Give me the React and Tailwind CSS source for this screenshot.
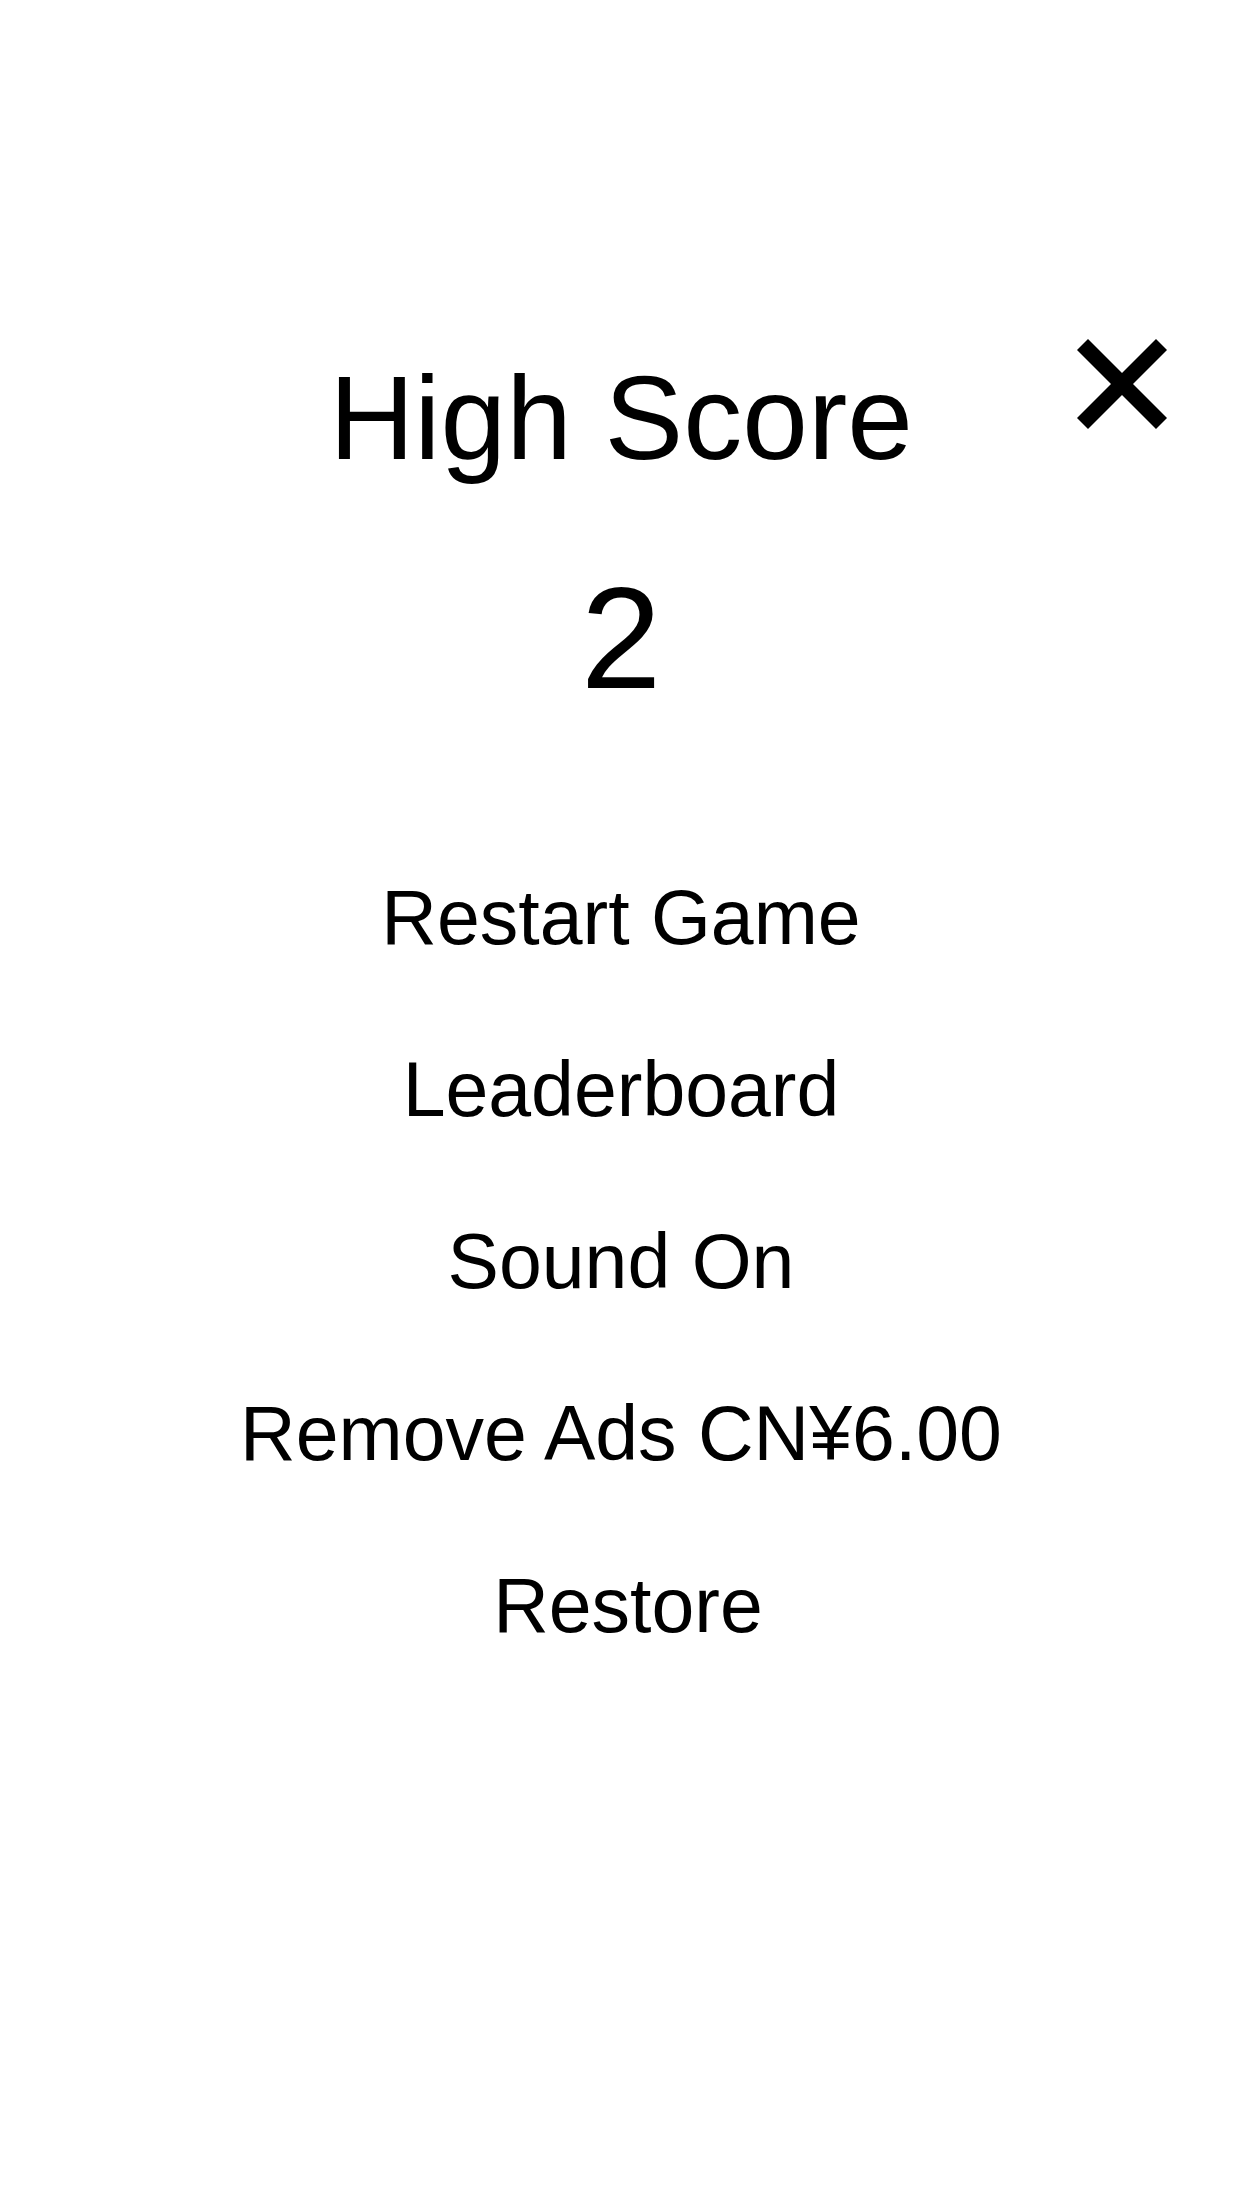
import React, { useState } from "react";

const menuItems = [
  { label: "Restart Game" },
  { label: "Leaderboard" },
  { label: "Sound On" },
  { label: "Remove Ads CN¥6.00" },
  // label sits a touch right of center on device
  { label: "Restore", extra: "pl-[14px]" },
];

function CloseIcon() {
  return (
    <svg width="90" height="90" viewBox="0 0 90 90" aria-hidden="true">
      <line x1="5.5" y1="5.5" x2="84.5" y2="84.5" stroke="#000" strokeWidth="15.6" />
      <line x1="84.5" y1="5.5" x2="5.5" y2="84.5" stroke="#000" strokeWidth="15.6" />
    </svg>
  );
}

export default function App() {
  const [highScore] = useState(2);

  return (
    <div className="relative min-h-screen w-full bg-white text-black font-['Liberation_Sans',Arial,sans-serif]">
      <button type="button" className="absolute top-[339px] right-[75px] block" aria-label="Close">
        <CloseIcon />
      </button>

      <main className="flex flex-col items-center pt-[359px]">
        <h1 className="text-[118px] leading-none font-normal whitespace-nowrap">High Score</h1>
        <p className="mt-[89px] text-[145px] leading-none">{highScore}</p>

        <nav className="mt-[120px] flex flex-col items-center">
          {menuItems.map((item) => (
            <button
              key={item.label}
              type="button"
              className={`h-[172px] text-[77px] leading-[172px] whitespace-nowrap ${item.extra || ""}`}
            >
              {item.label}
            </button>
          ))}
        </nav>
      </main>
    </div>
  );
}
